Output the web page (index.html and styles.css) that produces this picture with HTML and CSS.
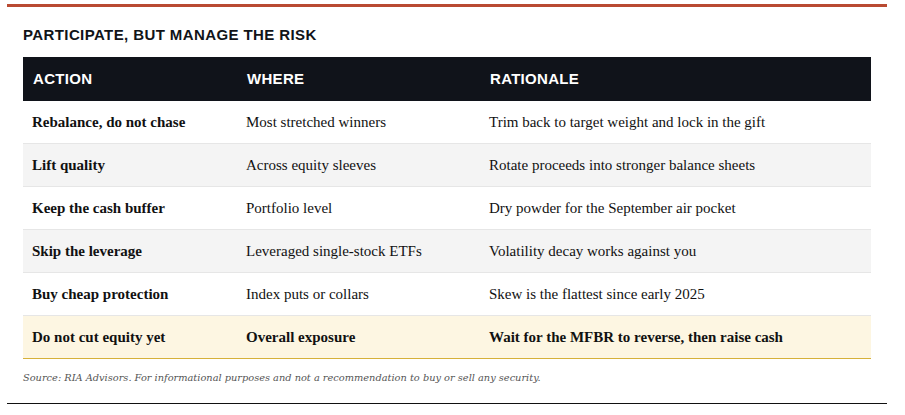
FILE: index.html
```html
<!DOCTYPE html>
<html>
<head>
<meta charset="utf-8">
<link rel="stylesheet" href="styles.css">
</head>
<body>
<section class="panel">
  <h2 class="title">PARTICIPATE, BUT MANAGE THE RISK</h2>
  <table class="risk">
    <colgroup>
      <col class="c1"><col class="c2"><col class="c3">
    </colgroup>
    <thead>
      <tr><th>ACTION</th><th>WHERE</th><th>RATIONALE</th></tr>
    </thead>
    <tbody>
      <tr><td class="act">Rebalance, do not chase</td><td>Most stretched winners</td><td>Trim back to target weight and lock in the gift</td></tr>
      <tr class="alt"><td class="act">Lift quality</td><td>Across equity sleeves</td><td>Rotate proceeds into stronger balance sheets</td></tr>
      <tr><td class="act">Keep the cash buffer</td><td>Portfolio level</td><td>Dry powder for the September air pocket</td></tr>
      <tr class="alt"><td class="act">Skip the leverage</td><td>Leveraged single-stock ETFs</td><td>Volatility decay works against you</td></tr>
      <tr><td class="act">Buy cheap protection</td><td>Index puts or collars</td><td>Skew is the flattest since early 2025</td></tr>
      <tr class="hl"><td class="act">Do not cut equity yet</td><td>Overall exposure</td><td>Wait for the MFBR to reverse, then raise cash</td></tr>
    </tbody>
  </table>
  <p class="source">Source: RIA Advisors. For informational purposes and not a recommendation to buy or sell any security.</p>
</section>
</body>
</html>
```
FILE: styles.css
```css
html, body { margin: 0; padding: 0; background: #fff; }
.panel {
  width: 880px;
  margin: 4px 0 0 7px;
  border-top: 3px solid #b94a32;
  border-bottom: 1px solid #111;
  padding: 0 16px;
  box-sizing: border-box;
}
.title {
  margin: 0;
  padding-top: 18px;
  height: 50px;
  box-sizing: border-box;
  font: bold 15px/20px "Liberation Sans", Arial, sans-serif;
  letter-spacing: 0.4px;
  color: #111418;
}
.risk {
  width: 848px;
  border-collapse: collapse;
  table-layout: fixed;
}
.c1 { width: 214px; }
.c2 { width: 243px; }
.c3 { width: 391px; }
.risk th {
  background: #10131a;
  color: #fff;
  text-align: left;
  height: 44px;
  padding: 0 10px;
  font: bold 15px/20px "Liberation Sans", Arial, sans-serif;
  letter-spacing: 0.3px;
}
.risk td {
  height: 42px;
  padding: 0 9px;
  border-bottom: 1px solid #e6e6e6;
  font: 15px/20px "Liberation Serif", "Times New Roman", serif;
  color: #111;
}
.risk td.act { font-weight: bold; }
.risk tr.alt td { background: #f4f4f4; }
.risk tr.hl td {
  background: #fdf6e2;
  font-weight: bold;
  border-bottom: 1px solid #d6b13a;
}
.source {
  margin: 0;
  padding: 12px 0 18px;
  font: italic 9.8px/14px "DejaVu Serif", Georgia, serif;
  color: #555;
}
```
